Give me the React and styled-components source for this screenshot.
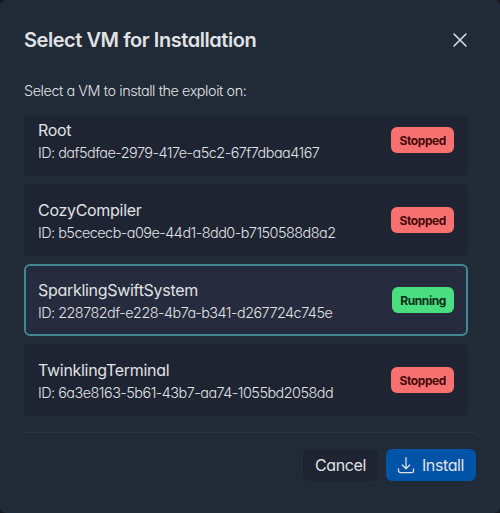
import React, { useState } from 'react';
import styled, { createGlobalStyle } from 'styled-components';

const theme = {
  page: '#15181f',
  panel: '#212a37',
  item: '#1e2432',
  itemSelected: '#262b3d',
  accent: '#43888d',
  text: '#e0e2e5',
  line: '#2b3341',
  primary: '#0054a8'
};

const vms = [
  { name: 'Root', id: 'daf5dfae-2979-417e-a5c2-67f7dbaa4167', running: false },
  { name: 'CozyCompiler', id: 'b5cececb-a09e-44d1-8dd0-b7150588d8a2', running: false },
  { name: 'SparklingSwiftSystem', id: '228782df-e228-4b7a-b341-d267724c745e', running: true },
  { name: 'TwinklingTerminal', id: '6a3e8163-5b61-43b7-aa74-1055bd2058dd', running: false }
];

const GlobalStyle = createGlobalStyle`
  *, *::before, *::after {
    box-sizing: border-box;
  }

  body {
    margin: 0;
    background: ${theme.page};
    color: ${theme.text};
    font-family: Inter, 'Liberation Sans', sans-serif;
    font-feature-settings: 'cv11';
  }

  button {
    font: inherit;
    font-feature-settings: inherit;
    color: inherit;
    border: 0;
    cursor: pointer;
  }
`;

const Dialog = styled.section`
  display: flex;
  flex-direction: column;
  width: 500px;
  height: 513px;
  padding: 24px;
  border-radius: 6px;
  background: ${theme.panel};
`;

const DialogHeader = styled.header`
  display: flex;
  align-items: center;
  justify-content: space-between;
  height: 32px;
  padding-right: 4px;
`;

const DialogTitle = styled.h2`
  margin: 0;
  font-size: 20px;
  line-height: 28px;
  font-weight: 600;
  letter-spacing: -0.45px;
`;

const CloseButton = styled.button`
  display: flex;
  padding: 0;
  background: transparent;
`;

const DialogHint = styled.p`
  margin: 25px 0 15px;
  font-size: 14.4px;
  line-height: 20px;
  font-weight: 300;
  letter-spacing: -0.43px;
`;

const VmList = styled.div`
  display: flex;
  flex-direction: column;
  justify-content: flex-end;
  gap: 8px;
  height: 300px;
  padding-right: 8px;
  overflow: hidden;
`;

const VmItem = styled.div`
  display: flex;
  flex-shrink: 0;
  align-items: center;
  justify-content: space-between;
  height: 72px;
  padding: 0 12px;
  border: 2px solid ${({ $selected }) => ($selected ? theme.accent : 'transparent')};
  border-radius: 6px;
  background: ${({ $selected }) => ($selected ? theme.itemSelected : theme.item)};
  cursor: pointer;
`;

const VmName = styled.div`
  font-size: 16px;
  line-height: 24px;
  letter-spacing: -0.3px;
`;

const VmId = styled.div`
  padding-top: 1px;
  font-size: 14.4px;
  line-height: 20px;
  font-weight: 300;
  letter-spacing: -0.51px;
`;

const StatusBadge = styled.span`
  padding: 6px 8px 4px;
  border-radius: 6px;
  background: ${({ $running }) => ($running ? '#4ade80' : '#f87171')};
  color: ${({ $running }) => ($running ? '#052e16' : '#450a0a')};
  font-size: 12px;
  line-height: 16px;
  font-weight: 700;
  letter-spacing: -0.4px;
`;

const DialogFooter = styled.footer`
  display: flex;
  justify-content: flex-end;
  gap: 8px;
  margin-top: 16px;
  padding-top: 16px;
  border-top: 1px solid ${theme.line};
`;

const ActionButton = styled.button`
  display: flex;
  align-items: center;
  gap: 6px;
  height: 32px;
  padding: 0 12px;
  border-radius: 6px;
  background: ${({ $primary }) => ($primary ? theme.primary : theme.item)};
  font-size: 16px;
  line-height: 24px;
  letter-spacing: -0.4px;
`;

const Icon = styled.svg.attrs({
  viewBox: '0 0 24 24',
  fill: 'none',
  stroke: 'currentColor',
  strokeWidth: 1.5,
  strokeLinecap: 'round',
  strokeLinejoin: 'round'
})`
  width: ${({ $size }) => $size}px;
  height: ${({ $size }) => $size}px;

  ${ActionButton} & {
    margin-left: -2px;
  }
`;

const App = () => {
  const [selected, setSelected] = useState(vms[2].id);

  return (
    <>
      <GlobalStyle />
      <Dialog>
        <DialogHeader>
          <DialogTitle>Select VM for Installation</DialogTitle>
          <CloseButton aria-label="Close">
            <Icon $size={24}>
              <path d="M6 18 18 6M6 6l12 12" />
            </Icon>
          </CloseButton>
        </DialogHeader>
        <DialogHint>Select a VM to install the exploit on:</DialogHint>
        <VmList>
          {vms.map(vm => (
            <VmItem key={vm.id} $selected={vm.id === selected} onClick={() => setSelected(vm.id)}>
              <div>
                <VmName>{vm.name}</VmName>
                <VmId>ID: {vm.id}</VmId>
              </div>
              <StatusBadge $running={vm.running}>{vm.running ? 'Running' : 'Stopped'}</StatusBadge>
            </VmItem>
          ))}
        </VmList>
        <DialogFooter>
          <ActionButton>Cancel</ActionButton>
          <ActionButton $primary>
            <Icon $size={20}>
              <path d="M3 16.5v2.25A2.25 2.25 0 0 0 5.25 21h13.5A2.25 2.25 0 0 0 21 18.75V16.5M16.5 12 12 16.5m0 0L7.5 12m4.5 4.5V3" />
            </Icon>
            Install
          </ActionButton>
        </DialogFooter>
      </Dialog>
    </>
  );
};

export default App;
